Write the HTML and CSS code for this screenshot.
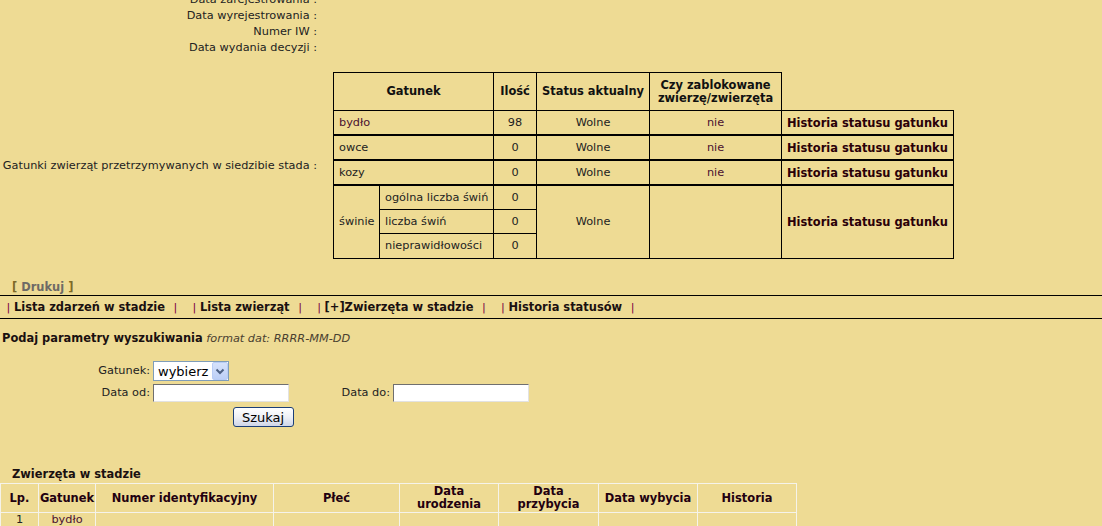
FILE: index.html
```html
<!DOCTYPE html>
<html lang="pl">
<head>
<meta charset="utf-8">
<title>Stado</title>
<link rel="stylesheet" href="styles.css">
</head>
<body>
<div class="page">
  <div class="info">
    <div class="lbl">Data zarejestrowania :</div><div class="val"></div>
    <div class="lbl">Data wyrejestrowania :</div><div class="val"></div>
    <div class="lbl">Numer IW :</div><div class="val"></div>
    <div class="lbl">Data wydania decyzji :</div><div class="val"></div>
    <div class="lbl lbl-mid">Gatunki zwierząt przetrzymywanych w siedzibie stada :</div>
    <div class="val val-table">
      <table class="species">
        <colgroup>
          <col class="s1"><col class="s2"><col class="s3"><col class="s4"><col class="s5"><col class="s6">
        </colgroup>
        <thead>
          <tr>
            <th colspan="2">Gatunek</th>
            <th>Ilość</th>
            <th>Status aktualny</th>
            <th>Czy zablokowane<br>zwierzę/zwierzęta</th>
            <th class="empty"></th>
          </tr>
        </thead>
        <tbody>
          <tr>
            <td colspan="2" class="name link">bydło</td><td>98</td><td>Wolne</td><td class="link">nie</td><td class="hist">Historia statusu gatunku</td>
          </tr>
          <tr class="sep">
            <td colspan="2" class="name">owce</td><td>0</td><td>Wolne</td><td class="link">nie</td><td class="hist">Historia statusu gatunku</td>
          </tr>
          <tr class="sep">
            <td colspan="2" class="name">kozy</td><td>0</td><td>Wolne</td><td class="link">nie</td><td class="hist">Historia statusu gatunku</td>
          </tr>
          <tr class="sep sub">
            <td rowspan="3" class="name">świnie</td><td class="name">ogólna liczba świń</td><td>0</td><td rowspan="3">Wolne</td><td rowspan="3"></td><td rowspan="3" class="hist">Historia statusu gatunku</td>
          </tr>
          <tr class="sub">
            <td class="name">liczba świń</td><td>0</td>
          </tr>
          <tr class="sub">
            <td class="name">nieprawidłowości</td><td>0</td>
          </tr>
        </tbody>
      </table>
    </div>
  </div>

  <div class="print"><span class="br">[</span> <span class="pr">Drukuj</span> <span class="br">]</span></div>

  <nav class="tabs">
    <span class="tab"><span class="bar">|</span><span class="tab-t">Lista zdarzeń w stadzie</span><span class="bar">|</span></span>
    <span class="tab"><span class="bar">|</span><span class="tab-t">Lista zwierząt</span><span class="bar">|</span></span>
    <span class="tab"><span class="bar">|</span><span class="tab-t">[+]Zwierzęta w stadzie</span><span class="bar">|</span></span>
    <span class="tab"><span class="bar">|</span><span class="tab-t">Historia statusów</span><span class="bar">|</span></span>
  </nav>

  <div class="search-title"><b>Podaj parametry wyszukiwania</b> <i>format dat: RRRR-MM-DD</i></div>

  <form class="search">
    <label class="f-lbl">Gatunek:</label>
    <div class="f-ctl f-span">
      <span class="select"><select><option>wybierz</option></select><span class="arrow"><svg width="14" height="16" viewBox="0 0 14 16"><path d="M3.5 6.5 L7 10 L10.5 6.5" fill="none" stroke="#4d6185" stroke-width="2"/></svg></span></span>
    </div>
    <label class="f-lbl">Data od:</label>
    <div class="f-ctl"><input type="text" class="txt"></div>
    <label class="f-lbl">Data do:</label>
    <div class="f-ctl"><input type="text" class="txt"></div>
    <div class="f-btn"><button type="button" class="btn">Szukaj</button></div>
  </form>

  <div class="list-title">Zwierzęta w stadzie</div>
  <table class="animals">
    <colgroup>
      <col class="a1"><col class="a2"><col class="a3"><col class="a4"><col class="a5"><col class="a6"><col class="a7"><col class="a8">
    </colgroup>
    <thead>
      <tr>
        <th>Lp.</th><th>Gatunek</th><th>Numer identyfikacyjny</th><th>Płeć</th><th>Data<br>urodzenia</th><th>Data<br>przybycia</th><th>Data wybycia</th><th>Historia</th>
      </tr>
    </thead>
    <tbody>
      <tr>
        <td>1</td><td class="link">bydło</td><td></td><td></td><td></td><td></td><td></td><td></td>
      </tr>
    </tbody>
  </table>
</div>
</body>
</html>
```

FILE: styles.css
```css
html, body {
  margin: 0;
  padding: 0;
  background: #eedb94;
}
body {
  font-family: "DejaVu Sans", Verdana, sans-serif;
  font-size: 11.3px;
  color: #222;
  overflow: hidden;
}
.page {
  width: 1102px;
}
b,
.species th,
.species td.hist,
.tab-t,
.print,
.list-title,
.animals th {
  font-size: 11.45px;
}

/* info block */
.info {
  display: grid;
  grid-template-columns: 317px 1fr;
  grid-template-rows: 16px 16px 16px 16px auto;
  column-gap: 16px;
  margin-top: -8px;
}
.lbl {
  text-align: right;
  line-height: 16px;
  white-space: nowrap;
}
.lbl-mid {
  align-self: center;
  margin-top: 16px;
  line-height: 14px;
}
.val-table {
  padding-top: 16px;
}

/* species table */
.species {
  border-collapse: collapse;
  table-layout: fixed;
  width: 621px;
}
.species col.s1 { width: 46px; }
.species col.s2 { width: 114px; }
.species col.s3 { width: 43px; }
.species col.s4 { width: 113px; }
.species col.s5 { width: 132px; }
.species col.s6 { width: 172px; }
.species th,
.species td {
  border: 1px solid #000;
  padding: 0 4px;
  text-align: center;
  white-space: nowrap;
}
.species th {
  height: 37px;
  font-weight: bold;
  line-height: 13px;
  color: #111;
}
.species th.empty {
  border: none;
}
.species td {
  height: 23px;
  line-height: 14px;
}
.species tr.sep > td {
  border-top: 2px solid #000;
}
.species tr.sub > td {
  height: 23px;
}
.species tr.sub:last-child > td {
  height: 24px;
}
.species td.name {
  text-align: left;
  padding-left: 5px;
}
.species td.hist {
  text-align: left;
  padding-left: 5px;
  font-weight: bold;
  color: #2a0008;
}
.link {
  color: #4a1030;
}

/* print */
.print {
  margin-top: 20px;
  height: 16px;
  line-height: 16px;
  padding-left: 12px;
  font-weight: bold;
}
.print .br {
  color: #7d6a28;
}
.print .pr {
  color: #6e6a66;
}

/* tabs */
.tabs {
  display: flex;
  align-items: center;
  border-top: 1px solid #000;
  border-bottom: 1px solid #000;
  height: 22px;
  padding-left: 6px;
  gap: 14px;
}
.tab {
  display: flex;
  align-items: center;
  color: #1a1010;
}
.bar {
  color: #7a0045;
  width: 5px;
  text-align: center;
}
.tab-t {
  font-weight: bold;
  margin-left: 3px;
  margin-right: 8px;
}

/* search title */
.search-title {
  margin-top: 12px;
  line-height: 14px;
  padding-left: 2px;
}
.search-title b {
  color: #1a1010;
}
.search-title i {
  color: #4a4030;
}

/* form */
.search {
  margin: 15px 0 0 0;
  display: grid;
  grid-template-columns: 153px 136px 104px 136px;
  grid-template-rows: 20px 18px 20px;
  row-gap: 3px;
  width: 529px;
}
.f-lbl {
  text-align: right;
  padding-right: 3px;
  line-height: 18px;
  align-self: center;
}
.f-span {
  grid-column: 2 / 5;
}
.f-btn {
  grid-column: 1 / 5;
  display: flex;
  justify-content: center;
  margin-top: 2px;
}
.select {
  display: inline-flex;
  box-sizing: border-box;
  width: 76px;
  height: 20px;
  border: 1px solid #7f9db9;
  background: #fff;
}
.select select {
  appearance: none;
  -webkit-appearance: none;
  border: 0;
  outline: none;
  background: transparent;
  width: 58px;
  height: 18px;
  padding: 0 0 0 4px;
  margin: 0;
  font-family: "DejaVu Sans", Tahoma, sans-serif;
  font-size: 13px;
  color: #000;
}
.arrow {
  box-sizing: border-box;
  width: 16px;
  height: 18px;
  border: 1px solid #b9cdf6;
  border-radius: 2px;
  background: linear-gradient(#d6e2fb, #bccff7);
  display: flex;
  align-items: center;
  justify-content: center;
}
.txt {
  box-sizing: border-box;
  width: 136px;
  height: 18px;
  margin: 0;
  padding: 0 2px;
  border-style: solid;
  border-width: 1px;
  border-color: #6f6f6f #e2e2e2 #e2e2e2 #6f6f6f;
  background: #fff;
  font-family: "DejaVu Sans", sans-serif;
  font-size: 11px;
}
.btn {
  box-sizing: border-box;
  width: 61px;
  height: 20px;
  margin: 0 0 0 -3px;
  padding: 0;
  border: 1px solid #1c3f78;
  border-radius: 3px;
  background: linear-gradient(#ffffff, #eef0f6 50%, #cfd6e8);
  font-family: "DejaVu Sans", Tahoma, sans-serif;
  font-size: 13px;
  color: #000;
}

/* animals list */
.list-title {
  margin-top: 42px;
  padding-left: 12px;
  line-height: 14px;
  font-weight: bold;
  color: #1a1010;
}
.animals {
  margin-top: 2px;
  border-collapse: collapse;
  table-layout: fixed;
  width: 797px;
}
.animals col.a1 { width: 38px; }
.animals col.a2 { width: 57px; }
.animals col.a3 { width: 178px; }
.animals col.a4 { width: 126px; }
.animals col.a5 { width: 99px; }
.animals col.a6 { width: 100px; }
.animals col.a7 { width: 99px; }
.animals col.a8 { width: 99px; }
.animals th,
.animals td {
  border: 1px solid #f5f3ea;
  padding: 0;
  text-align: center;
  white-space: nowrap;
}
.animals th {
  height: 28px;
  line-height: 13px;
  font-weight: bold;
  color: #220010;
}
.animals td {
  height: 30px;
  vertical-align: top;
  line-height: 13px;
}
```
